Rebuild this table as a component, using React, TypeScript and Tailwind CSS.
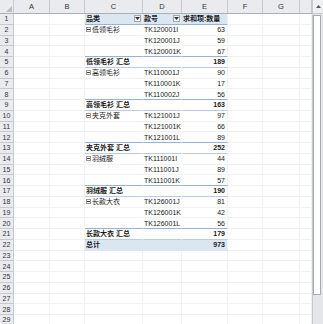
import React from 'react';

type Row =
  | { kind: 'head' }
  | { kind: 'item'; group?: string; code: string; qty: string }
  | { kind: 'sub'; label: string; qty: string }
  | { kind: 'total'; qty: string }
  | { kind: 'empty' };

const rows: Row[] = [
  { kind: 'head' },
  { kind: 'item', group: '低领毛衫', code: 'TK120001I', qty: '63' },
  { kind: 'item', code: 'TK120001J', qty: '59' },
  { kind: 'item', code: 'TK120001K', qty: '67' },
  { kind: 'sub', label: '低领毛衫 汇总', qty: '189' },
  { kind: 'item', group: '高领毛衫', code: 'TK110001J', qty: '90' },
  { kind: 'item', code: 'TK110001K', qty: '17' },
  { kind: 'item', code: 'TK110002J', qty: '56' },
  { kind: 'sub', label: '高领毛衫 汇总', qty: '163' },
  { kind: 'item', group: '夹克外套', code: 'TK121001J', qty: '97' },
  { kind: 'item', code: 'TK121001K', qty: '66' },
  { kind: 'item', code: 'TK121001L', qty: '89' },
  { kind: 'sub', label: '夹克外套 汇总', qty: '252' },
  { kind: 'item', group: '羽绒服', code: 'TK111001I', qty: '44' },
  { kind: 'item', code: 'TK111001J', qty: '89' },
  { kind: 'item', code: 'TK111001K', qty: '57' },
  { kind: 'sub', label: '羽绒服 汇总', qty: '190' },
  { kind: 'item', group: '长款大衣', code: 'TK126001J', qty: '81' },
  { kind: 'item', code: 'TK126001K', qty: '42' },
  { kind: 'item', code: 'TK126001L', qty: '56' },
  { kind: 'sub', label: '长款大衣 汇总', qty: '179' },
  { kind: 'total', qty: '973' },
  { kind: 'empty' },
  { kind: 'empty' },
  { kind: 'empty' },
  { kind: 'empty' },
  { kind: 'empty' },
  { kind: 'empty' },
  { kind: 'empty' },
];

const GRID = 'grid grid-cols-[14px_36px_35px_58px_39px_46px_35px_37px_12px]';
const CELL = 'border-r border-b border-[#f1f1f1] overflow-hidden whitespace-nowrap';

function Drop() {
  return (
    <span className="ml-auto mr-[1px] flex h-[7px] w-[7px] shrink-0 items-center justify-center border border-[#a8a8a8] bg-[#f2f2f2]">
      <svg width="5" height="3" viewBox="0 0 5 3">
        <path d="M0 0 L5 0 L2.5 3 Z" fill="#333" />
      </svg>
    </span>
  );
}

function Minus() {
  return (
    <span className="mr-[1px] flex h-[5px] w-[5px] shrink-0 items-center justify-center border border-[#9a9a9a] bg-white">
      <span className="h-[1px] w-[3px] bg-[#444]" />
    </span>
  );
}

function PivotCells({ r }: { r: Row }) {
  if (r.kind === 'head') {
    const c = 'flex items-center bg-[#dce6f1] border-b border-b-[#95b3d7] font-bold';
    return (
      <>
        <div className={`${CELL} ${c} pl-[1px]`}>
          品类
          <Drop />
        </div>
        <div className={`${CELL} ${c} pl-[1px] border-r-[#dce6f1]`}>
          款号
          <Drop />
        </div>
        <div className={`${CELL} ${c} pl-[1px]`}>求和项:数量</div>
      </>
    );
  }
  if (r.kind === 'item') {
    return (
      <>
        <div className={`${CELL} flex items-center pl-[1px] border-r-white`}>
          {r.group ? (
            <>
              <Minus />
              <span>{r.group}</span>
            </>
          ) : null}
        </div>
        <div className={`${CELL} flex items-center pl-[1px] border-r-white`}>{r.code}</div>
        <div className={`${CELL} flex items-center justify-end pr-[2px]`}>{r.qty}</div>
      </>
    );
  }
  if (r.kind === 'sub') {
    const c = 'flex items-center font-bold border-t border-t-[#95b3d7] border-b-[#b8cce4] -mt-[1px]';
    return (
      <>
        <div className={`${CELL} ${c} pl-[1px] border-r-white`}>{r.label}</div>
        <div className={`${CELL} ${c} border-r-white`} />
        <div className={`${CELL} ${c} justify-end pr-[2px]`}>{r.qty}</div>
      </>
    );
  }
  if (r.kind === 'total') {
    const c = 'flex items-center font-bold bg-[#dce6f1] border-b-[#dce6f1]';
    return (
      <>
        <div className={`${CELL} ${c} pl-[1px] border-r-[#dce6f1]`}>总计</div>
        <div className={`${CELL} ${c} border-r-[#dce6f1]`} />
        <div className={`${CELL} ${c} justify-end pr-[2px]`}>{r.qty}</div>
      </>
    );
  }
  return (
    <>
      <div className={CELL} />
      <div className={CELL} />
      <div className={CELL} />
    </>
  );
}

export default function App() {
  const letters = ['A', 'B', 'C', 'D', 'E', 'F', 'G', ''];
  return (
    <div
      className="flex h-[324px] w-[323px] overflow-hidden bg-white text-[7px] leading-none text-[#1a1a1a]"
      style={{ fontFamily: '"Liberation Sans", "Noto Sans CJK SC", Arial, sans-serif' }}
    >
      <div className="flex w-[312px] flex-col">
        <div className={`${GRID} h-[14px] shrink-0 border-b border-[#a9b0b8] bg-[#e9ebee] text-[7.5px] text-[#333]`}>
          <div className="relative border-r border-[#c6c9cd]">
            <svg className="absolute bottom-[1px] right-[1px]" width="6" height="6" viewBox="0 0 6 6">
              <path d="M6 0 L6 6 L0 6 Z" fill="#b9bcc0" />
            </svg>
          </div>
          {letters.map((l, i) => (
            <div key={i} className="flex items-center justify-center border-r border-[#c6c9cd]">
              {l}
            </div>
          ))}
        </div>
        {rows.map((r, i) => (
          <div key={i} className={`${GRID} h-[10.75px] shrink-0`}>
            <div className="flex items-center justify-center border-r border-b border-[#c6c9cd] bg-[#e9ebee] text-[7px] text-[#333]">
              {i + 1}
            </div>
            <div className={CELL} />
            <div className={CELL} />
            <PivotCells r={r} />
            <div className={CELL} />
            <div className={CELL} />
            <div className={CELL} />
          </div>
        ))}
      </div>
      <div className="flex w-[11px] flex-col border-l border-[#c6c9cd] bg-[#e4e6e9]">
        <div className="flex h-[14px] items-center justify-center border-b border-[#c6c9cd] bg-[#eef0f2]">
          <svg width="5" height="3" viewBox="0 0 5 3">
            <path d="M0 3 L5 3 L2.5 0 Z" fill="#555" />
          </svg>
        </div>
        <div className="mt-[1px] h-[280px] w-[8px] border border-[#a7abb0] bg-white" />
      </div>
    </div>
  );
}
